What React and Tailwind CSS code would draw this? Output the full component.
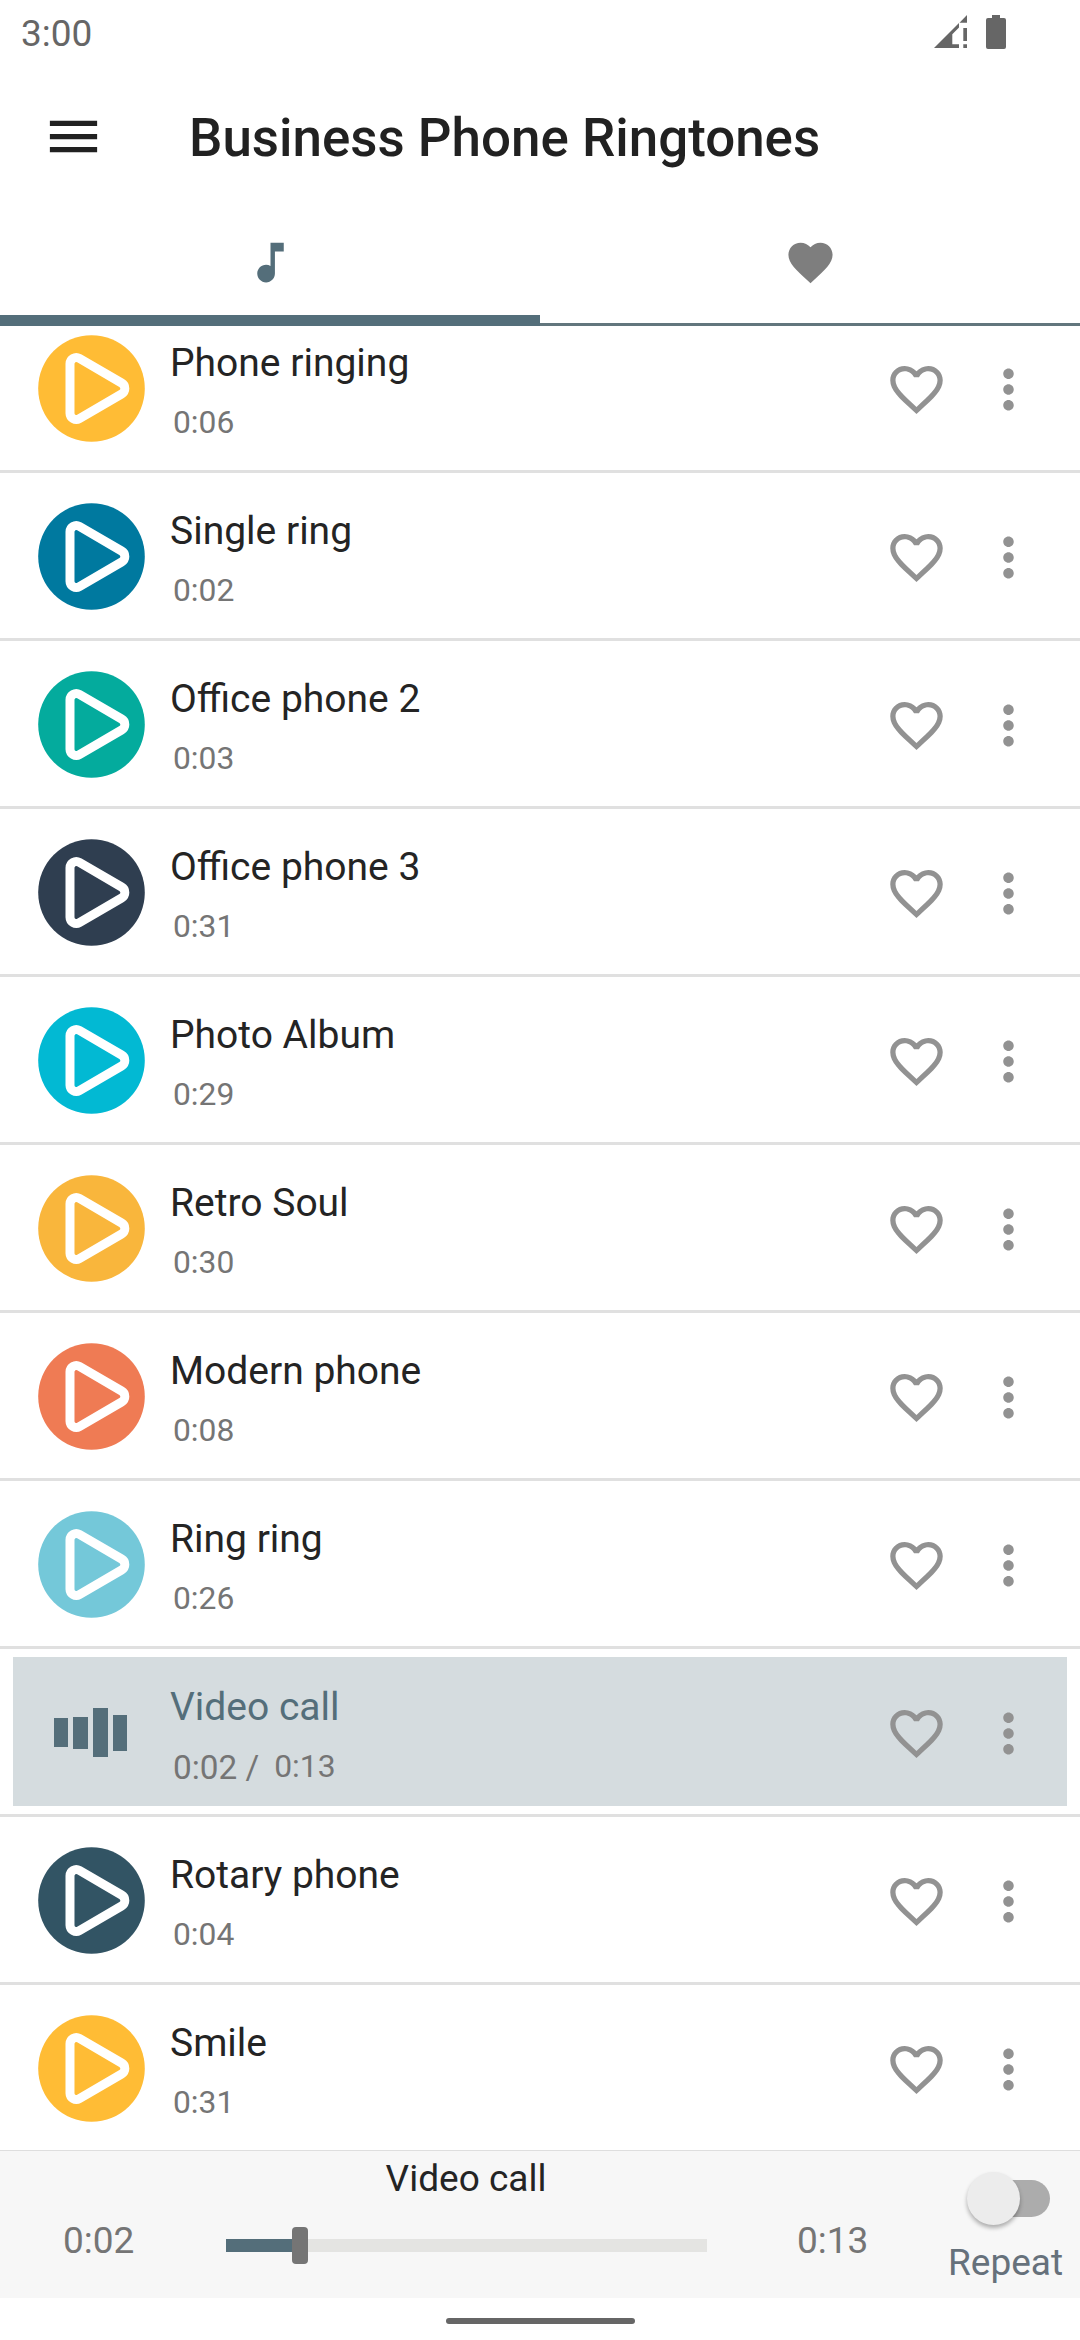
import React, { useState } from 'react';
import { MdFavorite, MdFavoriteBorder, MdMenu, MdMoreVert, MdMusicNote } from 'react-icons/md';

const ringtones = [
  { id: 1, name: 'Phone ringing', time: '0:06', color: '#ffbc35' },
  { id: 2, name: 'Single ring', time: '0:02', color: '#00799f' },
  { id: 3, name: 'Office phone 2', time: '0:03', color: '#04ab9d' },
  { id: 4, name: 'Office phone 3', time: '0:31', color: '#2f3e50' },
  { id: 5, name: 'Photo Album', time: '0:29', color: '#02b9d3' },
  { id: 6, name: 'Retro Soul', time: '0:30', color: '#f9b63c' },
  { id: 7, name: 'Modern phone', time: '0:08', color: '#ef7b54' },
  { id: 8, name: 'Ring ring', time: '0:26', color: '#74c8d9' },
  { id: 9, name: 'Video call', time: '0:13', color: '#546e7a' },
  { id: 10, name: 'Rotary phone', time: '0:04', color: '#325464' },
  { id: 11, name: 'Smile', time: '0:31', color: '#ffbc35' },
];

const StatusBar = () => (
  <div className="flex h-[63px] shrink-0 items-center justify-between pl-[21px] pr-[74px] text-[#666666]">
    <span className="pt-[3px] text-[37px] leading-[43px]">3:00</span>
    <div className="flex items-center gap-[19px]">
      <svg className="h-[33px] w-[33px]" viewBox="0 0 33 33" fill="currentColor">
        <path d="M0 33L25 8V12.500L18.300 19.300V29.300H25V33Z" />
        <path d="M25.500 7.700L33 0V7.700Z" />
        <path d="M29.300 13H33V26H29.300ZM29.300 29.300H33V33H29.300Z" />
      </svg>
      <svg className="h-[34px] w-5" viewBox="0 0 20 34" fill="currentColor">
        <path d="M6 0H14V3H18A2 2 0 0 1 20 5V32A2 2 0 0 1 18 34H2A2 2 0 0 1 0 32V5A2 2 0 0 1 2 3H6Z" />
      </svg>
    </div>
  </div>
);

const PlayButton = ({ color }) => (
  <svg className="h-[107px] w-[107px]" viewBox="0 0 107 107">
    <circle cx="53.5" cy="53.5" r="53.3" fill={color} />
    <path
      d="M32 28.700A6.300 6.300 0 0 1 41.400 23.300L83.600 48A6.300 6.300 0 0 1 83.600 59L41.400 83.700A6.300 6.300 0 0 1 32 78.300Z"
      fill="none"
      stroke="#fff"
      strokeWidth="9"
    />
  </svg>
);

const Equalizer = () => (
  <div className="flex h-[107px] w-[107px] items-center gap-[5px] pl-4">
    <span className="h-[29px] w-[14px] bg-[#546e7a]" />
    <span className="h-8 w-[15px] bg-[#546e7a]" />
    <span className="h-[49px] w-[15px] bg-[#546e7a]" />
    <span className="h-9 w-[14px] bg-[#546e7a]" />
  </div>
);

const RingtoneRow = ({ item, active }) => (
  <li className="h-[168px] border-b-[3px] border-[#e0e0e0] px-[13px] py-2">
    <div className={`flex h-[149px] items-center ${active ? 'bg-[#d5dcdf]' : ''}`}>
      <button className="ml-[25px] mt-[2px]">
        {active ? <Equalizer /> : <PlayButton color={item.color} />}
      </button>
      <div className="ml-[25px] flex-1 pt-[6px]">
        <p className={`text-[39px] leading-[46px] ${active ? 'text-[#546e7a]' : 'text-[#242424]'}`}>{item.name}</p>
        <p className="mt-[18px] flex pl-[3px] text-[31.800px] leading-[37px] text-[#757575]">
          {active && <span className="mr-[15px] pt-px text-[33.300px]">0:02 /</span>}
          <span>{item.time}</span>
        </p>
      </div>
      <button className="mr-[29px] pt-[3px] text-[#929292]"><MdFavoriteBorder size={63} /></button>
      <button className="mr-[27px] pt-[3px] text-[#929292]"><MdMoreVert size={63} /></button>
    </div>
  </li>
);

const Player = ({ item }) => (
  <footer className="flex h-[148px] shrink-0 border-t border-[#dedede] bg-[#f7f7f7]">
    <div className="w-[932px]">
      <p className="pt-[6px] text-center text-[37px] leading-[43px] text-[#242424]">{item.name}</p>
      <div className="mt-[19px] flex items-start text-[37px] leading-[43px] text-[#757575]">
        <span className="w-[226px] pl-[63px]">0:02</span>
        <div className="mt-2 flex h-[37px] w-[481px] items-center">
          <span className="h-[13px] w-[66px] bg-[#546e7a]" />
          <span className="h-[37px] w-4 rounded-[4px] bg-[#757575]" />
          <span className="h-[13px] flex-1 bg-[#e4e4e2]" />
        </div>
        <span className="pl-[90px]">{item.time}</span>
      </div>
    </div>
    <div className="flex flex-1 flex-col pt-[21px]">
      <div className="ml-[35px] flex h-[53px] w-[83px] items-center">
        <span className="z-10 h-[53px] w-[53px] rounded-full bg-[#ececec] shadow-[0_3px_4px_rgba(0,0,0,0.3)]" />
        <span className="-ml-6 h-[37px] w-[54px] rounded-r-full bg-[#acacac]" />
      </div>
      <span className="ml-4 mt-[16px] text-[37px] leading-[43px] text-[#66717b]">Repeat</span>
    </div>
  </footer>
);

const App = () => {
  const [activeId] = useState(9);
  const current = ringtones.find((r) => r.id === activeId);

  return (
    <div className="flex h-[2340px] w-[1080px] flex-col overflow-hidden bg-white font-['Roboto',sans-serif]">
      <StatusBar />

      <header className="flex h-[147px] shrink-0 items-center pl-[42px] text-[#212121]">
        <MdMenu size={63} />
        <h1 className="ml-[84px] pt-[2px] text-[52.900px] font-medium leading-[62px]">Business Phone Ringtones</h1>
      </header>

      <nav className="flex h-[116px] shrink-0">
        <button className="flex flex-1 items-center justify-center border-b-[11px] border-[#546e7a] text-[#546e7a]">
          <MdMusicNote size={53} />
        </button>
        <button className="flex flex-1 items-center justify-center border-b-[3px] border-[#62767d] pb-2 text-[#7e7e7e]">
          <MdFavorite size={53} />
        </button>
      </nav>

      <main className="min-h-0 flex-1 overflow-hidden">
        <ul className="-mt-[21px]">
          {ringtones.map((item) => (
            <RingtoneRow key={item.id} item={item} active={item.id === activeId} />
          ))}
        </ul>
      </main>

      <Player item={current} />

      <div className="flex h-[42px] shrink-0 items-center justify-center pt-1">
        <span className="h-[6px] w-[189px] rounded-full bg-[#666666]" />
      </div>
    </div>
  );
};

export default App;
